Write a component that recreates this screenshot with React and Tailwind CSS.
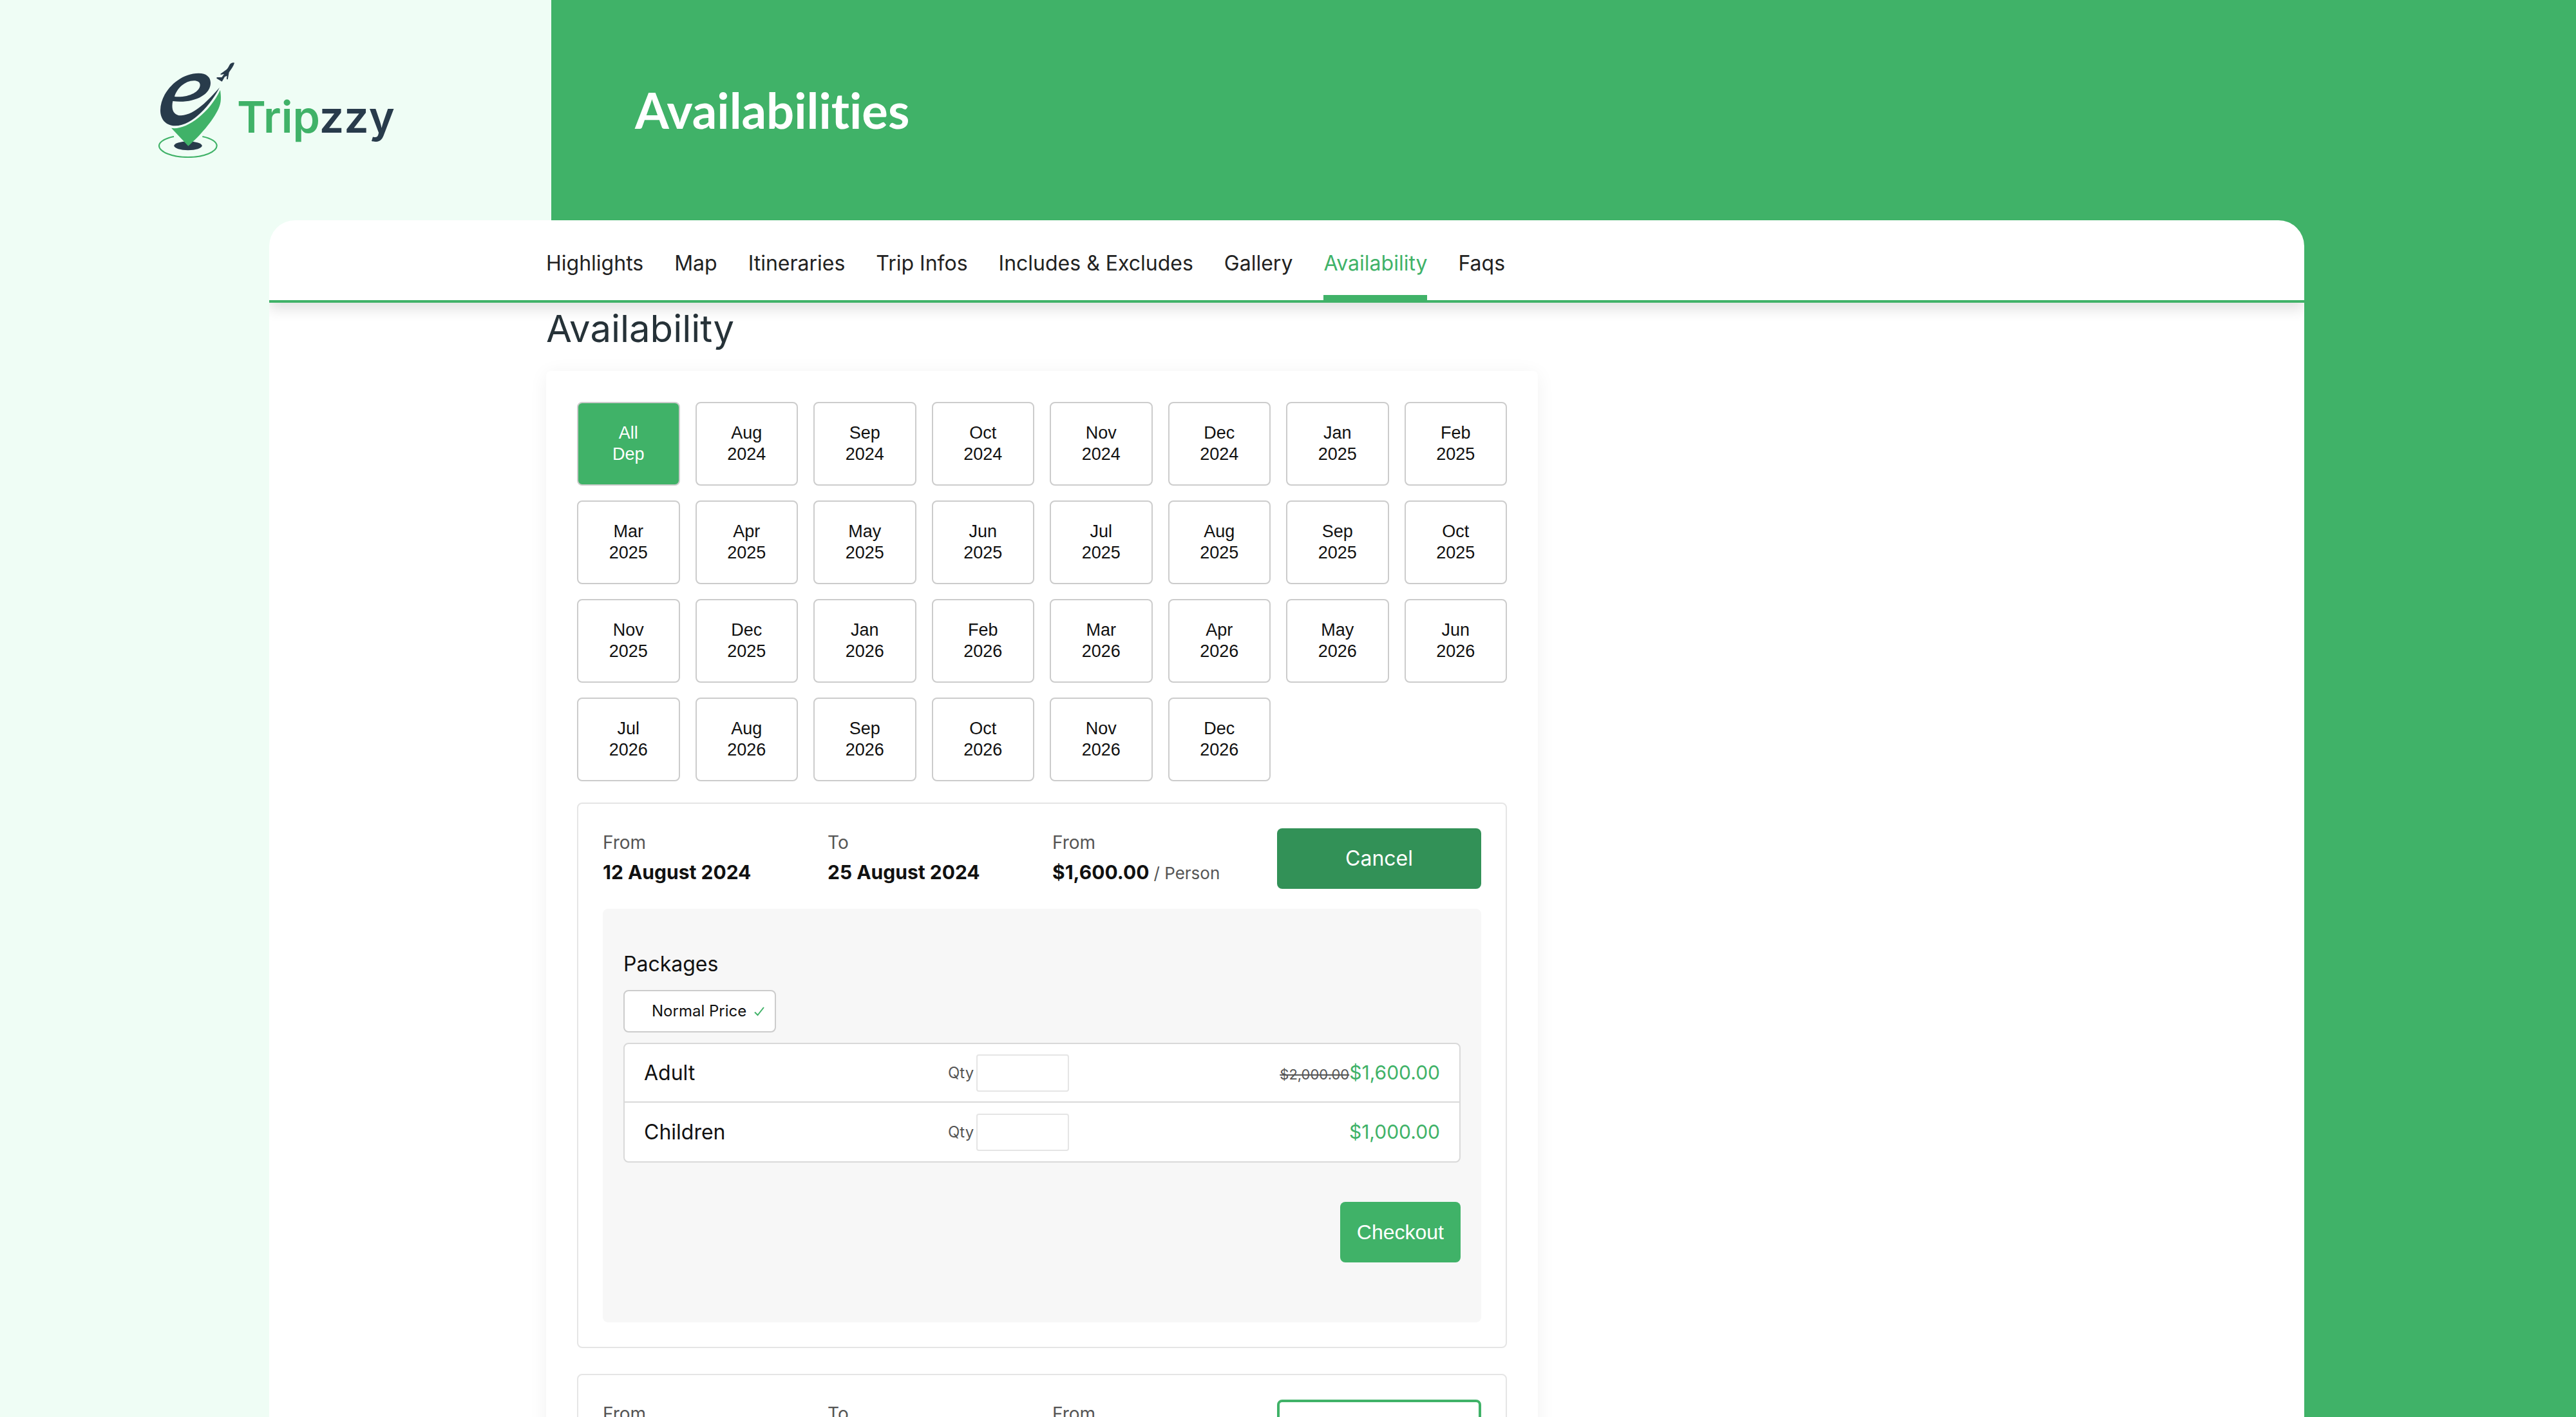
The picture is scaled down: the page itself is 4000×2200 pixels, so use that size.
import React from "react";

const tabs = ["Highlights", "Map", "Itineraries", "Trip Infos", "Includes & Excludes", "Gallery", "Availability", "Faqs"];

const months = [
  "All Dep", "Aug 2024", "Sep 2024", "Oct 2024", "Nov 2024", "Dec 2024", "Jan 2025", "Feb 2025",
  "Mar 2025", "Apr 2025", "May 2025", "Jun 2025", "Jul 2025", "Aug 2025", "Sep 2025", "Oct 2025",
  "Nov 2025", "Dec 2025", "Jan 2026", "Feb 2026", "Mar 2026", "Apr 2026", "May 2026", "Jun 2026",
  "Jul 2026", "Aug 2026", "Sep 2026", "Oct 2026", "Nov 2026", "Dec 2026",
];

const categories = [
  { name: "Adult", old: "$2,000.00", price: "$1,600.00" },
  { name: "Children", price: "$1,000.00" },
];

function LogoMark() {
  return (
    <svg className="h-[148px] w-[118px] shrink-0" viewBox="138 110 354 444" aria-hidden="true">
      <path d="M210 455C170 463 141 480 141 498C141 526 202 551 276 551C350 551 410 526 410 498C410 480 384 463 343 455" fill="none" stroke="#40b268" strokeWidth="6.500" />
      <ellipse cx="276" cy="498" rx="65" ry="20.500" fill="#283b4b" />
      <path d="M198 415C260 428 372 352 426 238C430 270 432 295 418 325C390 385 330 452 277 499Z" fill="#40b268" />
      <path fillRule="evenodd" fill="#283b4b" d="M205 290C196 330 210 358 244 357C310 352 370 285 423 226C385 300 300 405 216 405C170 405 147 372 147 333C147 250 232 160 325 160C362 160 381 178 381 205C381 265 295 302 205 290ZM213 269C275 275 332 248 332 214C332 202 321 195 303 195C262 195 224 231 213 269Z" />
      <path fill="#283b4b" d="M492 112C484 109 474 113 469 122C464 132 460 139 455 143L427 163L428 167L444 164L433 179L410 179L409 184L434 199L447 177L457 172L456 188L461 189L467 156C476 142 488 127 492 112Z" />
    </svg>
  );
}

function Field({ label, children }) {
  return (
    <div>
      <div className="text-[28px] leading-[44px] text-[#555]">{label}</div>
      <div className="h-12 text-[30px] leading-[48px] font-bold whitespace-nowrap text-[#111]">{children}</div>
    </div>
  );
}

export default function App() {
  return (
    <div className="flex h-screen flex-col overflow-hidden bg-[linear-gradient(to_right,#effdf5_856px,#40b268_856px)] font-['Inter',sans-serif]">
      <header className="flex h-[342px] shrink-0 items-center">
        <a href="#home" aria-label="Tripzzy" className="flex w-[856px] shrink-0 items-center pl-[246px]">
          <LogoMark />
          <span className="mt-5 pl-1 text-[68px] leading-none font-semibold text-[#40b268]">
            Trip<span className="text-[#283b4b]">zzy</span>
          </span>
        </a>
        <h1 className="pl-[130px] font-['Lato',sans-serif] text-[76px] leading-[90px] font-bold text-white [font-variant-ligatures:none]">Availabilities</h1>
      </header>

      <div className="mr-[422px] ml-[418px] flex-1 overflow-clip rounded-t-[40px] bg-white">
        <nav className="flex h-[128px] gap-12 border-b-4 border-[#40b268] pl-[430px] shadow-[0_10px_20px_rgba(0,0,0,0.12)]">
          {tabs.map((tab) => (
            <a
              key={tab}
              href={"#" + tab}
              className={
                tab === "Availability"
                  ? "border-b-8 border-[#40b268] pt-[43px] text-[32px] leading-[48px] whitespace-nowrap text-[#40b268]"
                  : "pt-[43px] text-[32px] leading-[48px] whitespace-nowrap text-[#222]"
              }
            >
              {tab}
            </a>
          ))}
        </nav>

        <main className="ml-[430px] w-[1540px]">
          <h2 className="h-[106px] pt-1.5 text-[58px] leading-[68px] text-[#263238]">Availability</h2>
          <div className="rounded-lg p-12 shadow-[0_4px_30px_rgba(0,0,0,0.06)]">
            <div className="grid grid-cols-8 gap-x-6 gap-y-[23px]">
              {months.map((m, i) => (
                <button
                  key={m}
                  type="button"
                  className={
                    i === 0
                      ? "flex h-[130px] flex-col items-center justify-center rounded-lg border-2 border-[#ccc] bg-[#40b268] font-['Liberation_Sans',sans-serif] text-[27px] leading-[33px] text-white"
                      : "flex h-[130px] flex-col items-center justify-center rounded-lg border-2 border-[#ccc] bg-white font-['Liberation_Sans',sans-serif] text-[27px] leading-[33px] text-[#111]"
                  }
                >
                  {m.split(" ").map((part) => (
                    <span key={part}>{part}</span>
                  ))}
                </button>
              ))}
            </div>

            <section className="mt-[33px] rounded-lg border-2 border-[#e5e5e5] p-[38px]">
              <div className="grid grid-cols-4 gap-8">
                <Field label="From">12 August 2024</Field>
                <Field label="To">25 August 2024</Field>
                <Field label="From">
                  $1,600.00 <span className="text-[26px] font-normal text-[#555]">/ Person</span>
                </Field>
                <button type="button" className="h-[94px] rounded-lg bg-[#329157] text-[32px] text-white">Cancel</button>
              </div>

              <div className="mt-[31px] rounded-lg bg-[#f7f7f7] px-8 pt-[62px] pb-[93px]">
                <h3 className="text-[32px] leading-[48px] text-[#111]">Packages</h3>
                <button type="button" className="mt-4 flex h-[66px] items-center gap-3 rounded-lg border-2 border-[#ccc] bg-white pr-4 pl-[42px] text-2xl text-[#111]">
                  Normal Price
                  <svg className="h-4 w-4" viewBox="0 0 16 16" fill="none" stroke="#40b268" strokeWidth="2" aria-hidden="true">
                    <path d="M1 9.500L5.500 14L15 2" />
                  </svg>
                </button>
                <ul className="mt-4 divide-y-2 divide-[#d9d9d9] rounded-lg border-2 border-[#d9d9d9] bg-white">
                  {categories.map((c) => (
                    <li key={c.name} className="flex h-[91px] items-center px-[30px]">
                      <span className="w-[472px] text-[32px] text-[#111]">{c.name}</span>
                      <label className="flex items-center gap-1 text-2xl text-[#555]">
                        Qty
                        <input type="text" className="h-[58px] w-[144px] rounded border-2 border-[#e5e5e5] bg-white px-3 text-2xl" />
                      </label>
                      <span className="ml-auto flex items-baseline text-[30px] text-[#40b268]">
                        {c.old && <del className="text-[22px] text-[#555]">{c.old}</del>}
                        {c.price}
                      </span>
                    </li>
                  ))}
                </ul>
                <div className="mt-[61px] flex justify-end">
                  <button type="button" className="h-[94px] rounded-lg bg-[#40b268] px-[26px] font-['Liberation_Sans',sans-serif] text-[32px] text-white">Checkout</button>
                </div>
              </div>
            </section>

            <section className="mt-10 rounded-lg border-2 border-[#e5e5e5] p-[38px]">
              <div className="grid grid-cols-4 gap-8">
                <Field label="From" />
                <Field label="To" />
                <Field label="From" />
                <button type="button" aria-label="Select" className="h-[94px] rounded-lg border-4 border-[#40b268] bg-white" />
              </div>
            </section>
          </div>
        </main>
      </div>
    </div>
  );
}
